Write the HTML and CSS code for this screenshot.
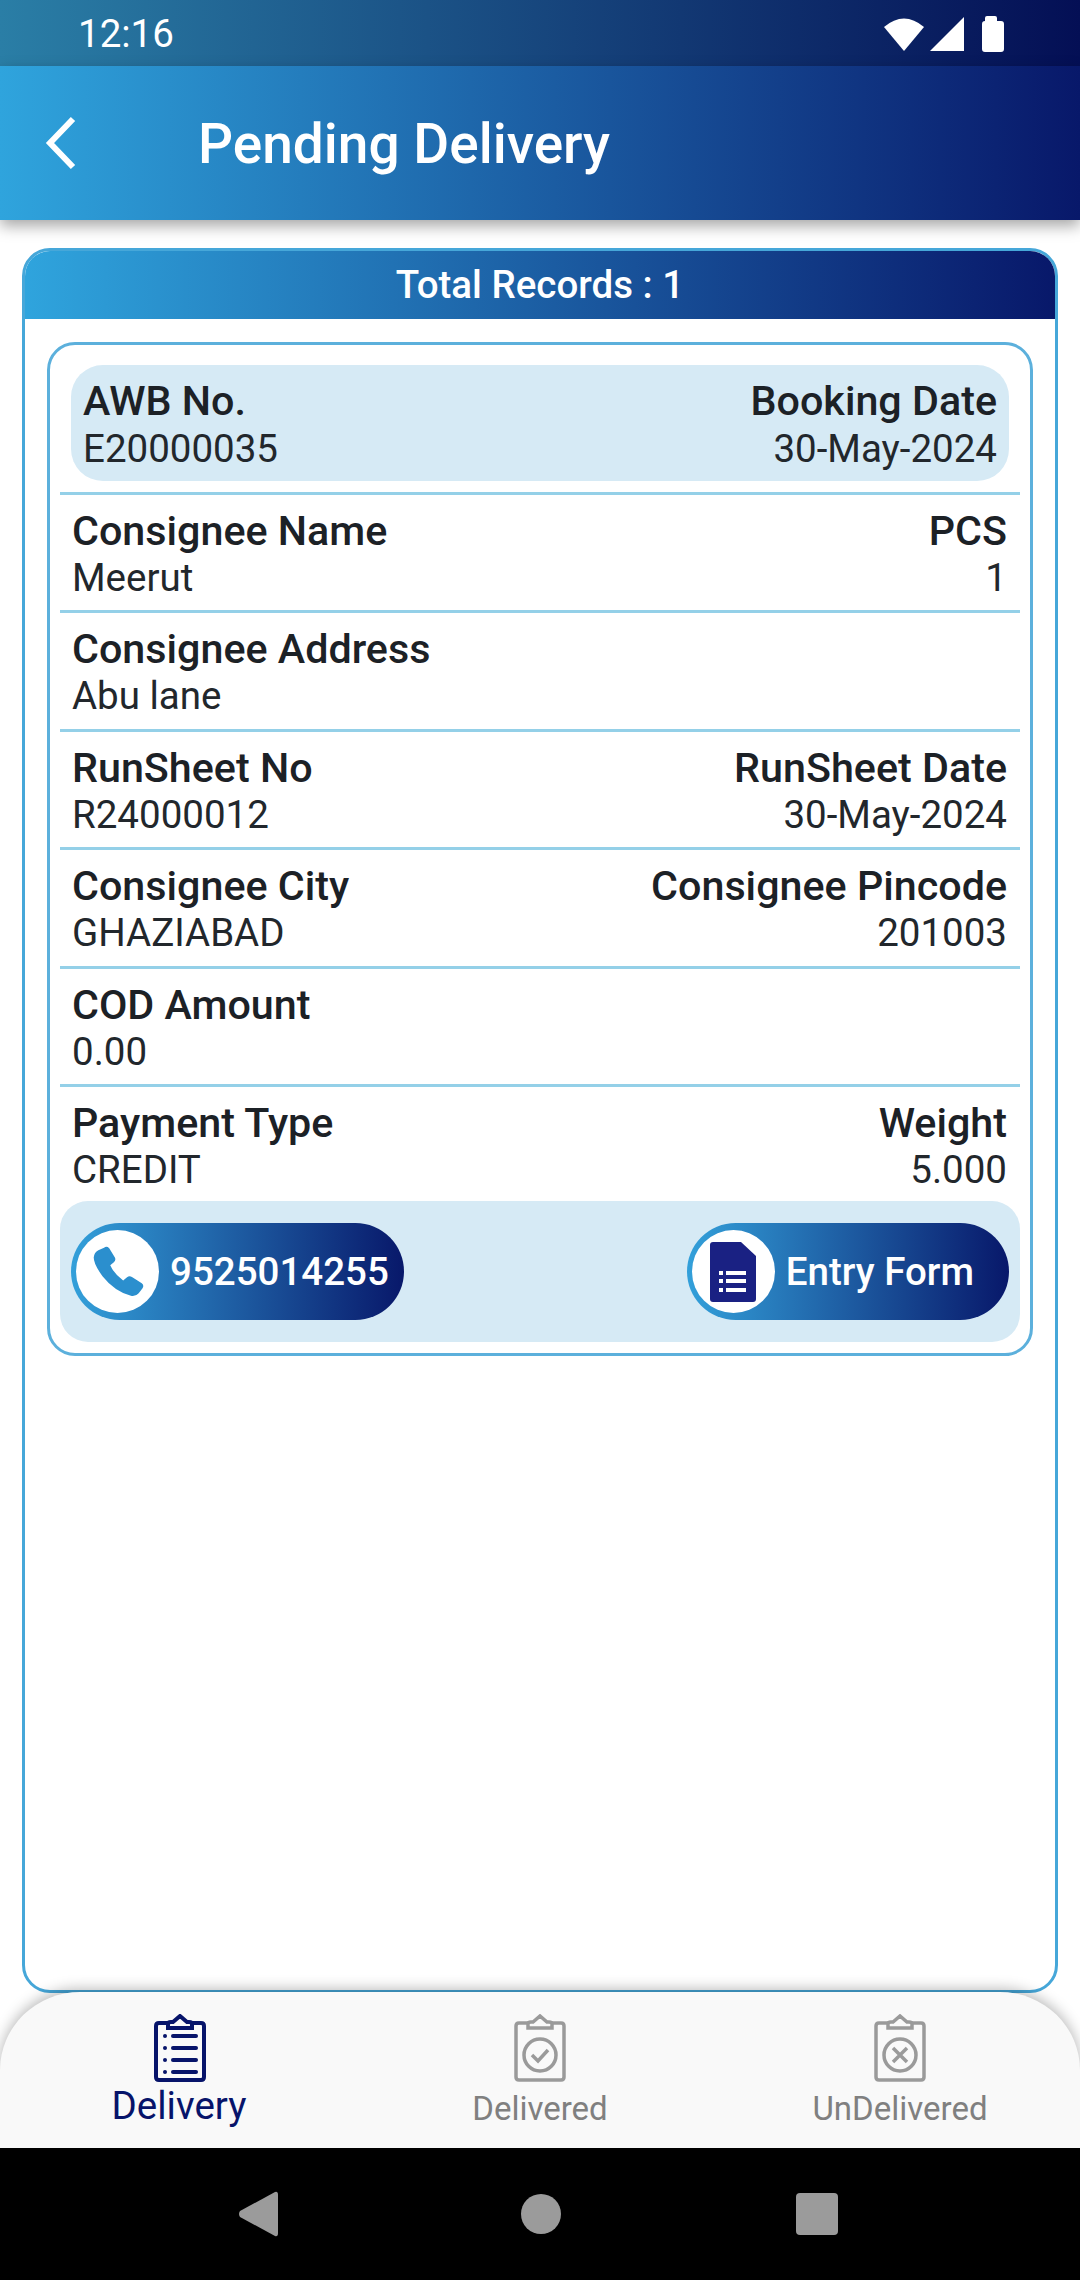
FILE: index.html
```html
<!DOCTYPE html>
<html lang="en">
<head>
<meta charset="utf-8">
<title>Pending Delivery</title>
<link rel="stylesheet" href="styles.css">
</head>
<body>
<div class="app">
  <div class="status">
    <span class="time">12:16</span>
    <svg class="status-icons" width="124" height="36" viewBox="0 0 124 36">
      <path d="M1 11 Q21 -6 41 11 L21 35 Z" fill="#fff"/>
      <path d="M47 35 L81 1 V35 Z" fill="#fff"/>
      <path d="M102 5 V2 Q102 0 104 0 H112 Q114 0 114 2 V5 H118 Q121 5 121 8 V33 Q121 36 118 36 H102 Q99 36 99 33 V8 Q99 5 102 5 Z" fill="#fff"/>
    </svg>
  </div>
  <header class="toolbar">
    <svg class="back" width="34" height="54" viewBox="0 0 34 54"><path d="M29 3 L6 27 L29 51" fill="none" stroke="#fff" stroke-width="6"/></svg>
    <h1 class="title">Pending Delivery</h1>
  </header>
  <main class="main">
    <section class="panel">
      <div class="panel-head">Total Records : 1</div>
      <div class="panel-body">
        <article class="record">
          <div class="row row-hl">
            <div class="cell"><div class="label">AWB No.</div><div class="value">E20000035</div></div>
            <div class="cell end"><div class="label">Booking Date</div><div class="value">30-May-2024</div></div>
          </div>
          <div class="row">
            <div class="cell"><div class="label">Consignee Name</div><div class="value">Meerut</div></div>
            <div class="cell end"><div class="label">PCS</div><div class="value">1</div></div>
          </div>
          <div class="row">
            <div class="cell"><div class="label">Consignee Address</div><div class="value">Abu lane</div></div>
          </div>
          <div class="row">
            <div class="cell"><div class="label">RunSheet No</div><div class="value">R24000012</div></div>
            <div class="cell end"><div class="label">RunSheet Date</div><div class="value">30-May-2024</div></div>
          </div>
          <div class="row">
            <div class="cell"><div class="label">Consignee City</div><div class="value">GHAZIABAD</div></div>
            <div class="cell end"><div class="label">Consignee Pincode</div><div class="value">201003</div></div>
          </div>
          <div class="row">
            <div class="cell"><div class="label">COD Amount</div><div class="value">0.00</div></div>
          </div>
          <div class="row row-last">
            <div class="cell"><div class="label">Payment Type</div><div class="value">CREDIT</div></div>
            <div class="cell end"><div class="label">Weight</div><div class="value">5.000</div></div>
          </div>
          <div class="actions">
            <div class="pill">
              <span class="pill-icon">
                <svg width="62" height="62" viewBox="0 0 24 24"><path d="M6.6 2.6 Q7.6 1.8 8.6 2.8 L10.8 6.4 Q11.3 7.4 10.4 8.2 L9 9.4 Q10.4 12.6 14 15.3 L15.5 14 Q16.4 13.3 17.4 13.9 L21.2 16.4 Q22.2 17.2 21.5 18.3 L20 20.2 Q18.8 21.6 17 21.2 Q10.6 19.4 6 13.6 Q2.6 9 2.6 6.4 Q2.8 4.4 4.4 3.6 Z" fill="#2b8fce"/></svg>
              </span>
              <span class="pill-text">9525014255</span>
            </div>
            <div class="pill pill-entry">
              <span class="pill-icon">
                <svg width="46" height="60" viewBox="0 0 46 60"><path d="M3 0 H31 L46 14 V57 Q46 60 43 60 H3 Q0 60 0 57 V3 Q0 0 3 0 Z" fill="#1a2183"/><path d="M9 29 h4 v4 h-4 z M16 29 h20 v4 h-20 z M9 37 h4 v4 h-4 z M16 37 h20 v4 h-20 z M9 46 h4 v4 h-4 z M16 46 h20 v4 h-20 z" fill="#fff"/></svg>
              </span>
              <span class="pill-text">Entry Form</span>
            </div>
          </div>
        </article>
      </div>
    </section>
  </main>
  <nav class="tabs">
    <div class="tab tab-active">
      <svg class="tab-icon" width="52" height="68" viewBox="0 0 52 68">
        <path d="M15 9 H5 Q2 9 2 12 V63 Q2 66 5 66 H47 Q50 66 50 63 V12 Q50 9 47 9 H37" fill="none" stroke="currentColor" stroke-width="4"/>
        <path d="M14 14 V10 Q14 8 17 8 H19 L26 2 L33 8 H35 Q38 8 38 10 V14 Z" fill="none" stroke="currentColor" stroke-width="4"/>
        <g fill="currentColor"><circle cx="11" cy="22" r="2"/><circle cx="11" cy="34" r="2"/><circle cx="11" cy="46" r="2"/><circle cx="11" cy="58" r="2"/><rect x="17" y="20" width="27" height="4" rx="2"/><rect x="17" y="32" width="27" height="4" rx="2"/><rect x="17" y="44" width="27" height="4" rx="2"/><rect x="17" y="56" width="27" height="4" rx="2"/></g>
      </svg>
      <span class="tab-label">Delivery</span>
    </div>
    <div class="tab">
      <svg class="tab-icon" width="52" height="68" viewBox="0 0 52 68">
        <path d="M15 9 H5 Q2 9 2 12 V63 Q2 66 5 66 H47 Q50 66 50 63 V12 Q50 9 47 9 H37" fill="none" stroke="currentColor" stroke-width="3.5"/>
        <path d="M14 14 V10 Q14 8 17 8 H19 L26 2 L33 8 H35 Q38 8 38 10 V14 Z" fill="none" stroke="currentColor" stroke-width="3.5"/>
        <circle cx="26" cy="41" r="16" fill="none" stroke="currentColor" stroke-width="3.5"/>
        <path d="M18 41 L24 47 L34 36" fill="none" stroke="currentColor" stroke-width="3.5"/>
      </svg>
      <span class="tab-label">Delivered</span>
    </div>
    <div class="tab">
      <svg class="tab-icon" width="52" height="68" viewBox="0 0 52 68">
        <path d="M15 9 H5 Q2 9 2 12 V63 Q2 66 5 66 H47 Q50 66 50 63 V12 Q50 9 47 9 H37" fill="none" stroke="currentColor" stroke-width="3.5"/>
        <path d="M14 14 V10 Q14 8 17 8 H19 L26 2 L33 8 H35 Q38 8 38 10 V14 Z" fill="none" stroke="currentColor" stroke-width="3.5"/>
        <circle cx="26" cy="41" r="16" fill="none" stroke="currentColor" stroke-width="3.5"/>
        <path d="M19 34 L33 48 M33 34 L19 48" fill="none" stroke="currentColor" stroke-width="3.5"/>
      </svg>
      <span class="tab-label">UnDelivered</span>
    </div>
  </nav>
  <div class="sysnav">
    <svg width="40" height="46" viewBox="0 0 40 46"><path d="M37 1 Q40 0 40 4 V42 Q40 46 37 45 L2 26 Q0 23 2 20 Z" fill="#9b9b9b"/></svg>
    <svg class="sys-home" width="40" height="40" viewBox="0 0 40 40"><circle cx="20" cy="20" r="20" fill="#9b9b9b"/></svg>
    <svg width="42" height="42" viewBox="0 0 42 42"><rect width="42" height="42" rx="4" fill="#9b9b9b"/></svg>
  </div>
</div>
</body>
</html>
```
FILE: styles.css
```css
* { box-sizing: border-box; }
html, body { margin: 0; padding: 0; }
body { background: #fff; font-family: Roboto, "Liberation Sans", sans-serif; color: #1c2126; }
.app { width: 1080px; height: 2280px; display: flex; flex-direction: column; overflow: hidden; }

.status { height: 66px; flex: none; display: flex; align-items: center; justify-content: space-between; padding: 0 73px 0 78px; background: linear-gradient(90deg, #2a7ea6, #040f55); }
.time { color: #fff; font-size: 38.5px; }
.status-icons { margin-top: 2px; }

.toolbar { height: 154px; flex: none; display: flex; align-items: center; background: linear-gradient(90deg, #2fa4dd, #08186a); box-shadow: 0 6px 14px rgba(0,0,0,.35); position: relative; z-index: 2; padding-left: 44px; }
.back { flex: none; }
.title { margin: 2px 0 0 120px; color: #fff; font-size: 55px; font-weight: 500; }

.main { flex: 1; min-height: 0; padding: 28px 22px 0; display: flex; }
.panel { flex: 1; display: flex; flex-direction: column; border: 3px solid #46a7d9; border-radius: 28px; overflow: hidden; background: #fff; }
.panel-head { height: 68px; flex: none; display: flex; align-items: center; justify-content: center; padding-bottom: 2px; color: #fff; font-size: 38.5px; font-weight: 500; background: linear-gradient(90deg, #2fa4dd, #08186a); }
.panel-body { padding: 23px 22px; }

.record { border: 3px solid #5cb0dc; border-radius: 28px; padding: 20px 10px 11px; }
.row { height: 118.5px; padding: 13px 13px 0 12px; display: flex; justify-content: space-between; border-bottom: 3px solid #94d0e8; }
.row-hl { height: 116px; margin: 0 11px 13.5px; padding: 13px 12px 0 12px; border-bottom: 0; background: #d6eaf5; border-radius: 32px; position: relative; }
.row-hl .value { margin-top: 2px; }
.row-hl::after { content: ""; position: absolute; left: -11px; right: -11px; bottom: -14px; height: 3px; background: #94d0e8; }
.row-last { border-bottom: 0; height: 114px; }
.cell { display: flex; flex-direction: column; }
.end { align-items: flex-end; text-align: right; }
.label { font-size: 41.25px; font-weight: 500; line-height: 46px; }
.value { font-size: 38.5px; line-height: 46px; margin-top: 1px; color: #22272c; }

.actions { height: 141px; background: #d6eaf5; border-radius: 28px; padding: 0 11px; display: flex; align-items: center; justify-content: space-between; }
.pill { height: 97px; display: flex; align-items: center; padding: 0 15px 0 5px; border-radius: 49px; background: linear-gradient(90deg, #33a0da, #08186a); }
.pill-entry { padding-right: 35px; }
.pill-icon { width: 83px; height: 83px; flex: none; display: flex; align-items: center; justify-content: center; background: #fff; border-radius: 50%; }
.pill-text { color: #fff; font-size: 38.5px; font-weight: 500; margin-left: 11px; }

.tabs { height: 156px; flex: none; margin-top: -1px; display: flex; background: #f9f9f9; border-radius: 80px 80px 0 0 / 78px 78px 0 0; box-shadow: 0 -3px 14px rgba(0,0,0,.28); position: relative; z-index: 2; }
.tab { flex: 1; display: flex; flex-direction: column; align-items: center; padding-top: 22px; color: #9a9a9a; }
.tab-icon { flex: none; }
.tab-label { font-size: 33px; line-height: 38px; color: #808080; margin-top: 8px; }
.tab-active { color: #07146a; }
.tab-active .tab-label { color: #07146a; font-size: 38.5px; margin: 3px 2px 0 0; line-height: 42px; }

.sysnav { height: 132px; flex: none; background: #000; display: flex; align-items: center; justify-content: space-between; padding: 0 242px 0 238px; }
.sys-home { margin-left: 7px; }
```
